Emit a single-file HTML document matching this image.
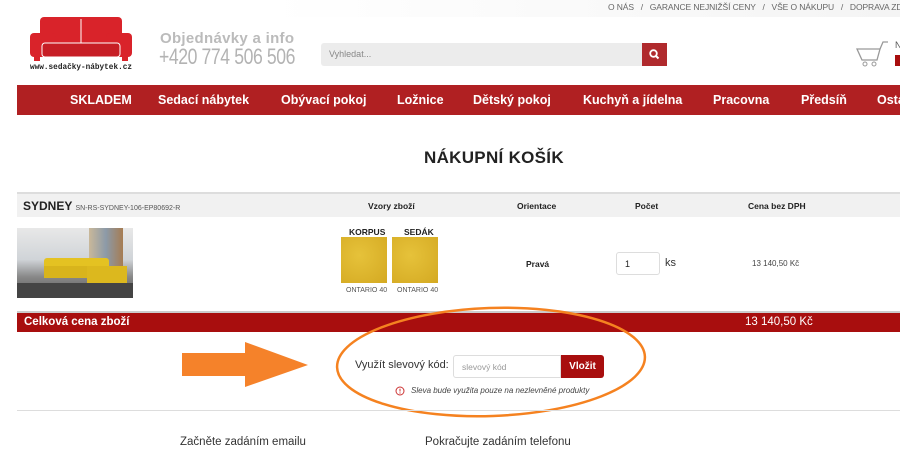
<!DOCTYPE html>
<html><head><meta charset="utf-8"><style>
*{margin:0;padding:0;box-sizing:border-box}
body{width:900px;height:450px;overflow:hidden;background:#fff;font-family:"Liberation Sans","DejaVu Sans",sans-serif;position:relative;color:#222}
.a{position:absolute}
.top{left:0;top:0;width:900px;height:17px;background:linear-gradient(90deg,#fff 30%,#f4f4f4 100%)}
.toplinks{top:2px;left:608px;font-size:8.5px;color:#666;white-space:nowrap;letter-spacing:-.1px}
.nav{left:17px;top:85px;width:883px;height:30px;background:#b02022;color:#fff;font-weight:bold;font-size:12.5px}
.nav span{position:absolute;top:8px;white-space:nowrap}
.th{left:17px;top:192px;width:883px;height:25px;background:#f1f1f1;border-top:2px solid #ddd;font-size:8.5px;font-weight:bold}
.total{left:17px;top:311px;width:883px;height:21px;background:#a80e0e;color:#fff;font-weight:bold;border-top:2px solid #ccc}
.sw{width:46px;height:46px;background:radial-gradient(circle at 40% 40%,#e6c23a,#d4a922);}
</style></head><body>
<div class="a top"></div>
<div class="a toplinks">O NÁS &nbsp; / &nbsp; GARANCE NEJNIŽŠÍ CENY &nbsp; / &nbsp; VŠE O NÁKUPU &nbsp; / &nbsp; DOPRAVA ZDARMA</div>
<svg class="a" style="left:28px;top:15px" width="106" height="56" viewBox="0 0 106 56">
<rect x="12" y="2" width="82" height="32" rx="4" fill="#d9232a"/>
<rect x="2" y="18" width="26" height="24" rx="4" fill="#d9232a"/>
<rect x="78" y="18" width="26" height="24" rx="4" fill="#d9232a"/>
<rect x="14" y="28" width="78" height="14" rx="3" fill="#c71e25" stroke="#fff" stroke-width="1"/>
<line x1="53" y1="4" x2="53" y2="28" stroke="#fff" stroke-width="1"/>
<rect x="6" y="42" width="6" height="4" fill="#d9232a"/><rect x="94" y="42" width="6" height="4" fill="#d9232a"/>
<text x="2" y="54" font-size="8" font-weight="bold" fill="#222" textLength="102" lengthAdjust="spacingAndGlyphs" font-family="Liberation Mono,monospace">www.sedačky-nábytek.cz</text>
</svg>
<div class="a" style="left:160px;top:30px;font-size:15px;font-weight:bold;color:#bbb;letter-spacing:.3px">Objednávky a info</div>
<div class="a" style="left:159px;top:44px;font-size:22px;color:#b3b3b3;letter-spacing:-.5px;transform:scaleX(.8);transform-origin:left">+420 774 506 506</div>
<div class="a" style="left:321px;top:43px;width:322px;height:23px;background:#ececec;border-radius:3px 0 0 3px;font-size:9px;color:#888;padding:6px 8px">Vyhledat...</div>
<div class="a" style="left:642px;top:43px;width:25px;height:23px;background:#b02a2d"><svg width="25" height="23"><circle cx="11.5" cy="10.5" r="3.3" stroke="#fff" stroke-width="1.8" fill="none"/><line x1="14" y1="13" x2="16.5" y2="15.5" stroke="#fff" stroke-width="2"/></svg></div>
<svg class="a" style="left:855px;top:40px" width="35" height="28"><path d="M2 9 H25 L22 20 H7 Z" fill="none" stroke="#999" stroke-width="1.3"/><path d="M25 9 L28 2 H33" fill="none" stroke="#999" stroke-width="1.3"/><circle cx="10" cy="24" r="2" fill="none" stroke="#999"/><circle cx="19" cy="24" r="2" fill="none" stroke="#999"/></svg>
<div class="a" style="left:895px;top:40px;font-size:9px;color:#555">N</div>
<div class="a" style="left:895px;top:55px;width:5px;height:11px;background:#a80e0e"></div>
<div class="a nav">
<span style="left:53px">SKLADEM</span><span style="left:141px">Sedací nábytek</span><span style="left:264px">Obývací pokoj</span><span style="left:380px">Ložnice</span><span style="left:456px">Dětský pokoj</span><span style="left:566px">Kuchyň a jídelna</span><span style="left:696px">Pracovna</span><span style="left:784px">Předsíň</span><span style="left:860px">Ostatní</span>
</div>
<div class="a" style="left:424px;top:148px;font-size:17px;font-weight:bold;letter-spacing:.3px;white-space:nowrap">NÁKUPNÍ KOŠÍK</div>
<div class="a th">
<span class="a" style="left:6px;top:5px;font-size:12px;font-weight:900">SYDNEY <span style="font-size:7px;font-weight:normal;color:#555">SN-RS-SYDNEY-106-EP80692-R</span></span>
<span class="a" style="left:351px;top:7px">Vzory zboží</span>
<span class="a" style="left:500px;top:7px">Orientace</span>
<span class="a" style="left:618px;top:7px">Počet</span>
<span class="a" style="left:731px;top:7px">Cena bez DPH</span>
</div>
<div class="a" style="left:17px;top:228px;width:116px;height:70px;background:linear-gradient(#e8e8e8 0%,#d0d4d8 45%,#888 70%,#555 100%);overflow:hidden">
<div class="a" style="left:72px;top:0;width:34px;height:45px;background:linear-gradient(90deg,#c9b89a,#8c9aa8,#a67c52)"></div>
<div class="a" style="left:27px;top:30px;width:65px;height:12px;background:#e4c222;border-radius:3px"></div>
<div class="a" style="left:27px;top:38px;width:45px;height:12px;background:#d8b41c"></div>
<div class="a" style="left:70px;top:38px;width:40px;height:18px;background:#dcb81e"></div>
<div class="a" style="left:0;top:55px;width:116px;height:15px;background:#444"></div>
</div>
<div class="a" style="left:349px;top:227px;font-size:8.5px;font-weight:bold">KORPUS</div>
<div class="a" style="left:404px;top:227px;font-size:8.5px;font-weight:bold">SEDÁK</div>
<div class="a sw" style="left:341px;top:237px"></div>
<div class="a sw" style="left:392px;top:237px"></div>
<div class="a" style="left:346px;top:287px;font-size:7px;color:#555">ONTARIO 40</div>
<div class="a" style="left:397px;top:287px;font-size:7px;color:#555">ONTARIO 40</div>
<div class="a" style="left:526px;top:259px;font-size:8.5px;font-weight:bold">Pravá</div>
<div class="a" style="left:616px;top:252px;width:44px;height:23px;border:1px solid #ddd;border-radius:3px;font-size:9px;padding:6px 8px">1</div>
<div class="a" style="left:665px;top:257px;font-size:11px;color:#333">ks</div>
<div class="a" style="left:752px;top:259px;font-size:8px;color:#444">13 140,50 Kč</div>
<div class="a total"><span class="a" style="left:7px;top:3px;font-size:11.5px">Celková cena zboží</span><span class="a" style="left:728px;top:3px;font-size:11.5px;font-weight:normal">13 140,50 Kč</span></div>
<div class="a" style="left:355px;top:359px;font-size:11px;color:#333;white-space:nowrap">Využít slevový kód:</div>
<div class="a" style="left:453px;top:355px;width:108px;height:23px;border:1px solid #ddd;border-radius:3px 0 0 3px;font-size:8.5px;color:#999;padding:6px 8px">slevový kód</div>
<div class="a" style="left:561px;top:355px;width:43px;height:23px;background:#a80e0e;border-radius:0 3px 3px 0;color:#fff;font-weight:bold;font-size:10px;text-align:center;line-height:23px">Vložit</div>
<svg class="a" style="left:395px;top:386px" width="10" height="10"><circle cx="5" cy="5" r="4" fill="none" stroke="#c33" stroke-width="1"/><line x1="5" y1="2.8" x2="5" y2="5.5" stroke="#c33"/><circle cx="5" cy="7" r=".6" fill="#c33"/></svg>
<div class="a" style="left:411px;top:386px;font-size:8px;font-style:italic;color:#444">Sleva bude využita pouze na nezlevněné produkty</div>
<svg class="a" style="left:0;top:0" width="900" height="450"><ellipse cx="491" cy="362" rx="154" ry="54" fill="none" stroke="#f58220" stroke-width="2.5" transform="rotate(-2 491 362)"/>
<polygon points="182,353 245,353 245,342 308,365 245,387 245,376 182,376" fill="#f5822a"/></svg>
<div class="a" style="left:17px;top:410px;width:883px;height:1px;background:#ddd"></div>
<div class="a" style="left:180px;top:436px;font-size:11.5px;color:#333">Začněte zadáním emailu</div>
<div class="a" style="left:425px;top:436px;font-size:11.5px;color:#333">Pokračujte zadáním telefonu</div>
</body></html>
